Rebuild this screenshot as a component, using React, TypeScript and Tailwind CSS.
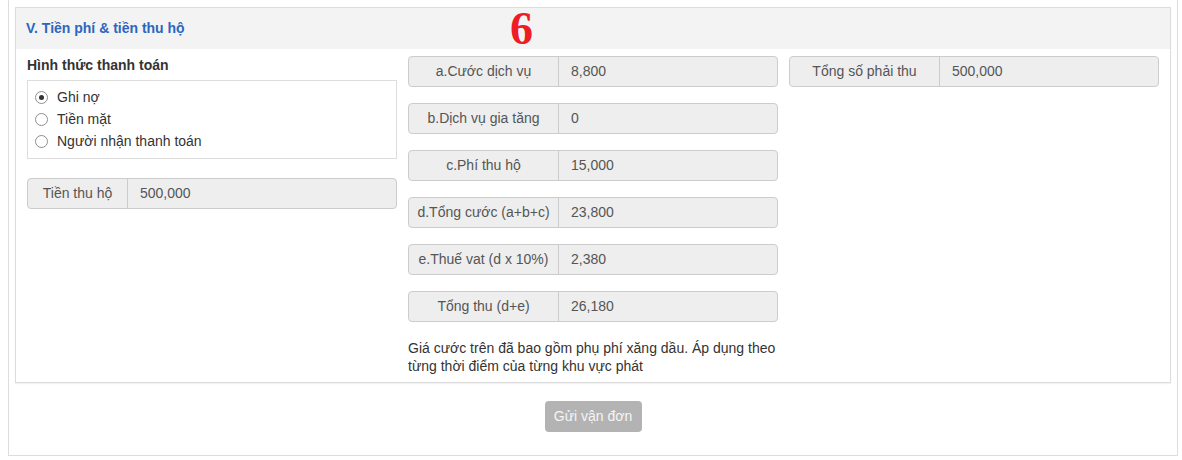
import React, { useState } from "react";

interface FeeRow {
  label: string;
  value: string;
}

// Fee breakdown shown in the middle column
const feeRows: FeeRow[] = [
  { label: "a.Cước dịch vụ", value: "8,800" },
  { label: "b.Dịch vụ gia tăng", value: "0" },
  { label: "c.Phí thu hộ", value: "15,000" },
  { label: "d.Tổng cước (a+b+c)", value: "23,800" },
  { label: "e.Thuế vat (d x 10%)", value: "2,380" },
  { label: "Tổng thu (d+e)", value: "26,180" },
];

const paymentOptions = ["Ghi nợ", "Tiền mặt", "Người nhận thanh toán"];

const InputGroup: React.FC<FeeRow & { labelWidth?: string }> = ({ label, value, labelWidth = "w-[150px]" }) => {
  return (
    <div className="flex h-[31px] rounded-[4px] border border-[#cccccc] bg-[#eeeeee] text-[14px] text-[#555555]">
      <div className={`${labelWidth} shrink-0 flex items-center justify-center border-r border-[#cccccc]`}>
        {label}
      </div>
      <div className="flex-1 flex items-center pl-3">{value}</div>
    </div>
  );
};

const App: React.FC = () => {
  const [payment, setPayment] = useState<number>(0);

  return (
    <div className="w-[1182px] h-[460px] bg-white font-['Liberation_Sans',Arial,sans-serif]">
      <div className="ml-[8px] w-[1170px] h-[456px] border-x border-b border-[#dddddd] flex flex-col">
        {/* Panel */}
        <div className="relative mt-[7px] ml-[6px] w-[1156px] border border-[#dddddd] shadow-[0_1px_1px_rgba(0,0,0,0.05)]">
          <div className="h-[41px] bg-[#f3f3f3] flex items-center pl-[10px]">
            <span className="text-[14px] font-bold text-[#2b66c0]">V. Tiền phí &amp; tiền thu hộ</span>
          </div>

          {/* annotation number */}
          <span className="absolute left-[494px] top-[-2px] text-[46px] leading-none font-bold text-[#ee1c24] font-['Liberation_Serif',serif]">
            6
          </span>

          <div className="grid grid-cols-3 gap-x-[11px] pl-[11px] pr-[11px] pt-[7px] pb-[7px]">
            {/* Column 1: payment method */}
            <div>
              <div className="text-[14px] font-bold text-[#333333] h-[18px] leading-[18px]">Hình thức thanh toán</div>
              <div className="mt-[6px] h-[79px] border border-[#dddddd] pt-[5px] pl-[7px]">
                {paymentOptions.map((opt, i) => (
                  <label
                    key={opt}
                    className="flex items-center h-[22px] text-[14px] text-[#333333] cursor-pointer"
                    onClick={() => setPayment(i)}
                  >
                    <span className="w-[13px] h-[13px] mr-[9px] rounded-full border border-[#8f8f8f] bg-white flex items-center justify-center">
                      {payment === i && <span className="w-[5px] h-[5px] rounded-full bg-[#333333]" />}
                    </span>
                    {opt}
                  </label>
                ))}
              </div>
              <div className="mt-[19px]">
                <InputGroup label="Tiền thu hộ" value="500,000" labelWidth="w-[100px]" />
              </div>
            </div>

            {/* Column 2: fee breakdown */}
            <div className="flex flex-col gap-[16px]">
              {feeRows.map((row) => (
                <InputGroup key={row.label} label={row.label} value={row.value} />
              ))}
              <p className="mt-[1px] text-[14px] leading-[18px] text-[#333333]">
                Giá cước trên đã bao gồm phụ phí xăng dầu. Áp dụng theo từng thời điểm của từng khu vực phát
              </p>
            </div>

            {/* Column 3: total */}
            <div>
              <InputGroup label="Tổng số phải thu" value="500,000" />
            </div>
          </div>
        </div>

        <div className="flex justify-center mt-[18px]">
          <button
            disabled
            className="w-[97px] h-[31px] rounded-[4px] bg-[#b3b3b3] text-[14px] text-[#f5f5f5]"
          >
            Gửi vận đơn
          </button>
        </div>
      </div>
    </div>
  );
};

export default App;
